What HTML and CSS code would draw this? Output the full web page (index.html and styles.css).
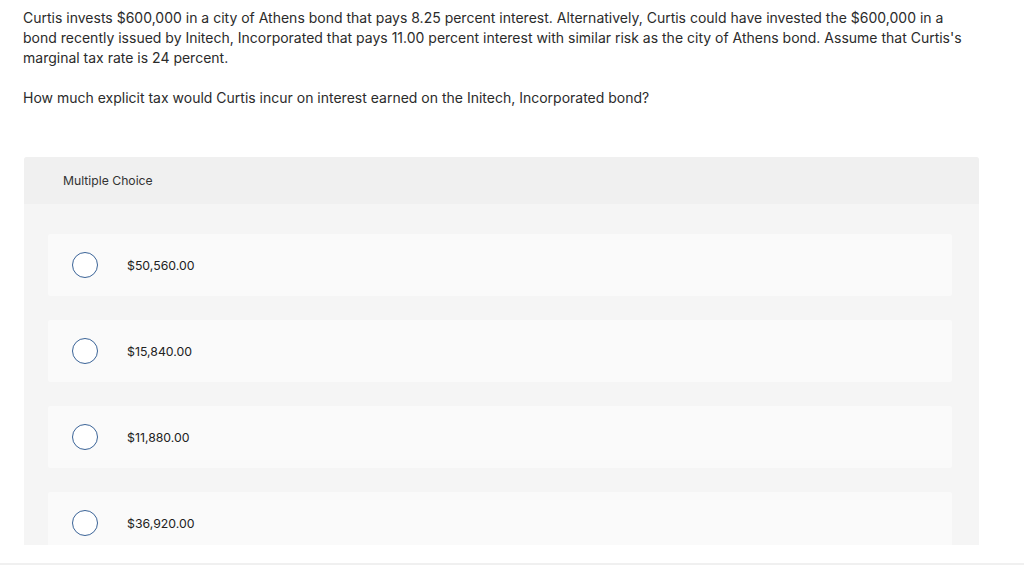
FILE: index.html
```html
<!DOCTYPE html>
<html>
<head>
<meta charset="utf-8">
<link rel="stylesheet" href="styles.css">
</head>
<body>
<div class="page">
  <div class="question">
    <p class="stem">Curtis invests $600,000 in a city of Athens bond that pays 8.25 percent interest. Alternatively, Curtis could have invested the $600,000 in a bond recently issued by Initech, Incorporated that pays 11.00 percent interest with similar risk as the city of Athens bond. Assume that Curtis's marginal tax rate is 24 percent.</p>
    <p class="ask">How much explicit tax would Curtis incur on interest earned on the Initech, Incorporated bond?</p>
  </div>
  <div class="card">
    <div class="card-head">Multiple Choice</div>
    <div class="card-body">
      <div class="option"><span class="radio"></span><span class="label">$50,560.00</span></div>
      <div class="option"><span class="radio"></span><span class="label">$15,840.00</span></div>
      <div class="option"><span class="radio"></span><span class="label">$11,880.00</span></div>
      <div class="option"><span class="radio"></span><span class="label">$36,920.00</span></div>
    </div>
  </div>
  <div class="footer-line"></div>
</div>
</body>
</html>
```
FILE: styles.css
```css
html, body {
  margin: 0;
  padding: 0;
  background: #ffffff;
}
body {
  font-family: "Inter", "Lato", "Liberation Sans", sans-serif;
  color: #2b2b2b;
  height: 567px;
  overflow: hidden;
}
.page {
  display: flex;
  flex-direction: column;
}
.question {
  padding: 8px 0 0 23px;
  width: 950px;
  font-size: 14px;
  line-height: 20px;
}
.stem {
  margin: 0;
}
.ask {
  margin: 20px 0 0 0;
}
.card {
  margin: 49px 0 0 24px;
  width: 955px;
  height: 388px;
  overflow: hidden;
  border-radius: 3px 3px 0 0;
  background: #f5f5f5;
}
.card-head {
  height: 47px;
  background: #f0f0f0;
  padding-left: 39px;
  font-size: 12.2px;
  line-height: 47px;
  color: #333;
}
.card-body {
  padding: 30px 27px 0 24px;
  display: flex;
  flex-direction: column;
  gap: 24px;
}
.option {
  height: 62px;
  background: #fafafa;
  border-radius: 2px;
  display: flex;
  align-items: center;
  padding-left: 24px;
  flex-shrink: 0;
}
.radio {
  width: 24px;
  height: 24px;
  border: 1px solid #3a6397;
  border-radius: 50%;
  background: #fff;
  flex-shrink: 0;
}
.label {
  margin-left: 29px;
  font-size: 12.3px;
  color: #222;
}
.footer-line {
  margin-top: 18px;
  height: 2px;
  background: #f0f0f0;
}
```
